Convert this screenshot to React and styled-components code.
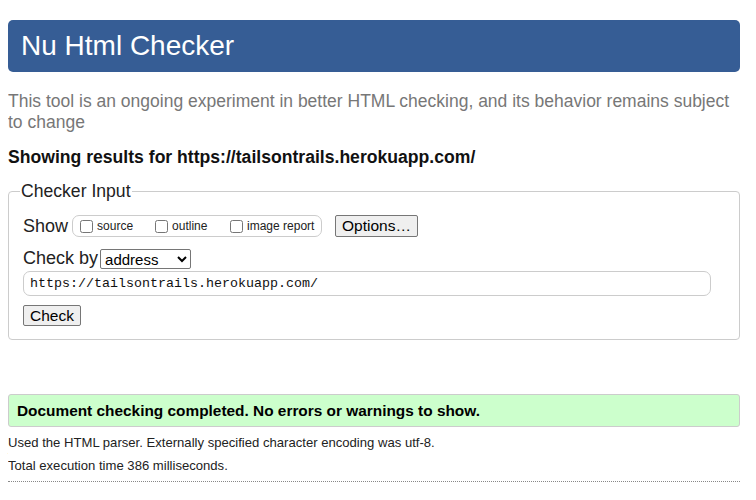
import styled, { createGlobalStyle } from "styled-components";

const GlobalStyle = createGlobalStyle`
  body {
    margin: 8px;
    font-family: "Liberation Sans", Arial, sans-serif;
    background: #fff;
    color: #000;
  }
`;

const Page = styled.div`
  width: 732px;
`;

const Header = styled.h1`
  margin: 12px 0 0;
  height: 52px;
  display: flex;
  align-items: center;
  padding: 0 13px;
  background: #365d95;
  border-radius: 5px;
  color: #fff;
  font-size: 28px;
  font-weight: normal;
`;

const Intro = styled.p`
  margin: 19px 0 0;
  font-size: 17.5px;
  line-height: 21px;
  color: #777;
`;

const ResultsFor = styled.p`
  margin: 14px 0 0;
  font-size: 17.6px;
  font-weight: bold;
  color: #111;
`;

const Fieldset = styled.fieldset`
  margin: 13px 0 0;
  padding: 4px 14px 13px;
  border: 1px solid #ccc;
  border-radius: 4px;
`;

const Legend = styled.legend`
  margin-left: -3px;
  padding: 0 1px;
  font-size: 17.6px;
  color: #222;
`;

const Row = styled.div`
  display: flex;
  align-items: center;
  margin-top: ${(p) => p.$top || 0}px;
`;

const RowLabel = styled.span`
  font-size: 18px;
  color: #222;
  margin-right: ${(p) => p.$gap || 4}px;
`;

const OptionGroup = styled.div`
  display: flex;
  align-items: center;
  width: 250px;
  height: 22px;
  box-sizing: border-box;
  border: 1px solid #ccc;
  border-radius: 7px;
  padding-left: 7px;
`;

const Option = styled.label`
  display: flex;
  align-items: center;
  font-size: 12px;
  color: #222;
  width: ${(p) => p.$w}px;
`;

const Box = styled.input`
  margin: 0 4px 0 0;
  width: 13px;
  height: 13px;
`;

const Button = styled.button`
  font-family: "Liberation Sans", Arial, sans-serif;
  font-size: 15.5px;
  color: #000;
  background: #efefef;
  border: 1px solid #767676;
  border-radius: 2px;
  height: ${(p) => p.$h || 22}px;
  padding: 0 6px;
  margin-left: ${(p) => p.$left || 0}px;
`;

const Select = styled.select`
  font-family: "Liberation Sans", Arial, sans-serif;
  font-size: 15px;
  width: 91px;
  height: 20px;
  border: 1px solid #767676;
  border-radius: 2px;
  background: #fff;
  padding: 0;
`;

const UrlInput = styled.input`
  display: block;
  box-sizing: border-box;
  width: 688px;
  height: 25px;
  margin-top: 2px;
  padding: 0 6px;
  border: 1px solid #ccc;
  border-radius: 7px;
  font-family: "Liberation Mono", monospace;
  font-size: 13.33px;
  color: #111;
`;

const Success = styled.div`
  margin-top: 54px;
  height: 33px;
  box-sizing: border-box;
  display: flex;
  align-items: center;
  padding: 0 8px;
  background: #ccffcc;
  border: 1px solid #ccc;
  border-radius: 3px;
  font-size: 15.4px;
  font-weight: bold;
  color: #000;
`;

const Note = styled.p`
  margin: ${(p) => p.$top}px 0 0;
  font-size: 13.1px;
  color: #222;
`;

const Rule = styled.hr`
  margin: 8px 0 0;
  border: none;
  border-top: 1px dotted #888;
`;

export default function App() {
  return (
    <Page>
      <GlobalStyle />
      <Header>Nu Html Checker</Header>
      <Intro>
        This tool is an ongoing experiment in better HTML checking, and its
        behavior remains subject to change
      </Intro>
      <ResultsFor>Showing results for https://tailsontrails.herokuapp.com/</ResultsFor>
      <Fieldset>
        <Legend>Checker Input</Legend>
        <Row $top={9}>
          <RowLabel>Show</RowLabel>
          <OptionGroup>
            <Option $w={75}>
              <Box type="checkbox" />
              source
            </Option>
            <Option $w={75}>
              <Box type="checkbox" />
              outline
            </Option>
            <Option>
              <Box type="checkbox" />
              image report
            </Option>
          </OptionGroup>
          <Button $left={13}>Options…</Button>
        </Row>
        <Row $top={11}>
          <RowLabel $gap={2}>Check by</RowLabel>
          <Select defaultValue="address">
            <option value="address">address</option>
            <option value="file">file upload</option>
            <option value="text">text input</option>
          </Select>
        </Row>
        <UrlInput defaultValue="https://tailsontrails.herokuapp.com/" />
        <Row $top={9}>
          <Button $h={21}>Check</Button>
        </Row>
      </Fieldset>
      <Success>Document checking completed. No errors or warnings to show.</Success>
      <Note $top={8}>Used the HTML parser. Externally specified character encoding was utf-8.</Note>
      <Note $top={8}>Total execution time 386 milliseconds.</Note>
      <Rule />
    </Page>
  );
}
